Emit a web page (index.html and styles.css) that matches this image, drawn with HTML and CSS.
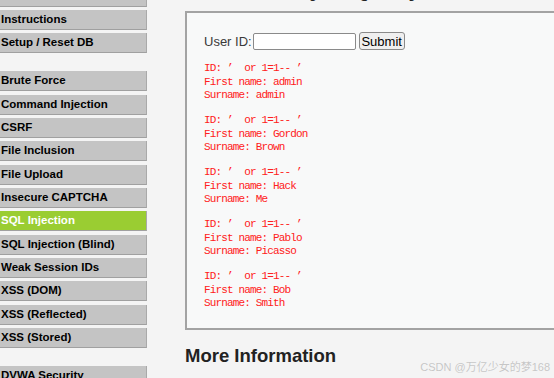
FILE: index.html
```html
<!DOCTYPE html>
<html lang="en">
<head>
  <meta charset="UTF-8" />
  <title>Vulnerability: SQL Injection</title>
  <link rel="stylesheet" href="styles.css">
</head>
<body>

  <div class="page">
    <div class="menu">
      <ul class="menu-group">
        <li><a href="#">Home</a></li>
        <li><a href="#">Instructions</a></li>
        <li><a href="#">Setup / Reset DB</a></li>
      </ul>
      <ul class="menu-group">
        <li><a href="#">Brute Force</a></li>
        <li><a href="#">Command Injection</a></li>
        <li><a href="#">CSRF</a></li>
        <li><a href="#">File Inclusion</a></li>
        <li><a href="#">File Upload</a></li>
        <li><a href="#">Insecure CAPTCHA</a></li>
        <li class="selected"><a href="#">SQL Injection</a></li>
        <li><a href="#">SQL Injection (Blind)</a></li>
        <li><a href="#">Weak Session IDs</a></li>
        <li><a href="#">XSS (DOM)</a></li>
        <li><a href="#">XSS (Reflected)</a></li>
        <li><a href="#">XSS (Stored)</a></li>
      </ul>
      <ul class="menu-group">
        <li><a href="#">DVWA Security</a></li>
      </ul>
    </div>

    <div class="main">
      <h1>Vulnerability: SQL Injection</h1>

      <div class="vulnerable-code">
        <form class="lookup" onsubmit="return false">
          <label for="uid">User ID:</label>
          <input id="uid" type="text" class="uid">
          <input type="submit" value="Submit" class="submit">
        </form>
<pre>ID: <span class="q">’</span> or 1=1-- <span class="q">’</span>
First name: admin
Surname: admin</pre>
<pre>ID: <span class="q">’</span> or 1=1-- <span class="q">’</span>
First name: Gordon
Surname: Brown</pre>
<pre>ID: <span class="q">’</span> or 1=1-- <span class="q">’</span>
First name: Hack
Surname: Me</pre>
<pre>ID: <span class="q">’</span> or 1=1-- <span class="q">’</span>
First name: Pablo
Surname: Picasso</pre>
<pre>ID: <span class="q">’</span> or 1=1-- <span class="q">’</span>
First name: Bob
Surname: Smith</pre>
      </div>

      <h2>More Information</h2>
    </div>
  </div>

  <div class="watermark">CSDN @万亿少女的梦168</div>

</body>
</html>
```

FILE: styles.css
```css
body {
  margin: 0;
  background: #f4f4f4;
  font-family: "Liberation Sans", Arial, sans-serif;
  color: #333;
  overflow: hidden;
}
.page {
  display: flex;
  align-items: flex-start;
}

/* left menu */
.menu {
  width: 147px;
  flex: none;
  margin-top: -13.3px;
}
.menu-group {
  list-style: none;
  margin: 0;
  padding: 0 0 14.7px;
}
.menu-group li {
  margin-bottom: 3.33px;
}
.menu-group a {
  display: block;
  box-sizing: border-box;
  height: 20px;
  padding-left: 1px;
  line-height: 19px;
  font-size: 11.5px;
  font-weight: bold;
  color: #000;
  text-decoration: none;
  background: #c4c4c4;
  border-right: 1px solid #a9a9a9;
  border-bottom: 1px solid #a0a0a0;
}
.menu-group li.selected a {
  background: #9acd32;
  color: #fff;
}

/* main column */
.main {
  flex: none;
  width: 440px;
  margin-left: 38px;
}
h1 {
  margin: -26px 0 9px;
  font-size: 23px;
  line-height: 28px;
  color: #222;
}
.vulnerable-code {
  background: #f8f9f9;
  border: 2px solid #a3a3a3;
  padding: 19px 20px 18px 17px;
}
.lookup {
  display: flex;
  align-items: center;
  height: 18px;
  margin: 0 0 12.3px;
  font-size: 13px;
}
.lookup label {
  color: #3a3a3a;
  margin-right: 1px;
}
.uid {
  box-sizing: border-box;
  width: 103px;
  height: 17px;
  margin: 0;
  padding: 0 2px;
  border: 1px solid #8a8a8a;
  border-radius: 2px;
  background: #fff;
}
.submit {
  box-sizing: border-box;
  width: 46px;
  height: 18px;
  margin: 0 0 0 3px;
  padding: 0;
  font-family: "Liberation Sans", Arial, sans-serif;
  font-size: 13px;
  color: #000;
  background: #efefef;
  border: 1px solid #8a8a8a;
  border-radius: 3px;
}
pre {
  margin: 0 0 12px;
  font-family: "Liberation Mono", monospace;
  font-size: 11px;
  line-height: 13.33px;
  letter-spacing: -0.85px;
  color: #ff2020;
}
pre:last-child {
  margin-bottom: 0;
}
pre .q {
  display: inline-block;
  width: 11.5px;
}
h2 {
  margin: 15px 0 0;
  font-size: 18.5px;
  line-height: 22px;
  color: #222;
}

.watermark {
  position: absolute;
  right: 4px;
  bottom: 4px;
  font-family: "Liberation Sans", "Noto Sans CJK SC", sans-serif;
  font-size: 11px;
  color: #c6c6c6;
  text-shadow: 0 0 1px #fff;
}
```
